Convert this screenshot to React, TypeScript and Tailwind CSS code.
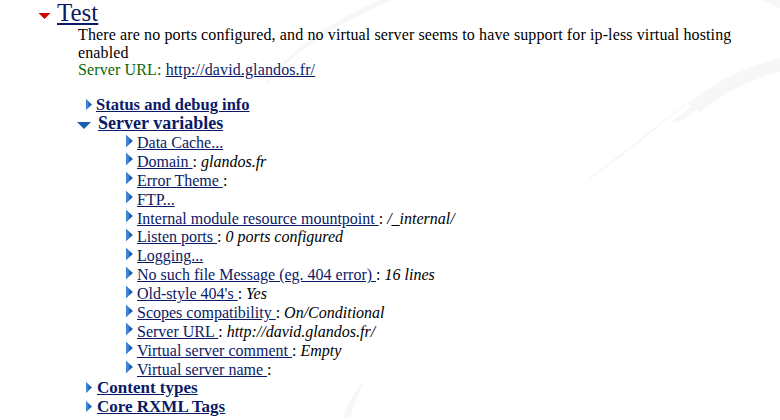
import React from "react";

type Row = { label: string; value?: string };

const rows: Row[] = [
  { label: "Data Cache..." },
  { label: "Domain", value: "glandos.fr" },
  { label: "Error Theme", value: "" },
  { label: "FTP..." },
  { label: "Internal module resource mountpoint", value: "/_internal/" },
  { label: "Listen ports", value: "0 ports configured" },
  { label: "Logging..." },
  { label: "No such file Message (eg. 404 error)", value: "16 lines" },
  { label: "Old-style 404's", value: "Yes" },
  { label: "Scopes compatibility", value: "On/Conditional" },
  { label: "Server URL", value: "http://david.glandos.fr/" },
  { label: "Virtual server comment", value: "Empty" },
  { label: "Virtual server name", value: "" },
];

function RightArrow({ className }: { className?: string }) {
  return (
    <svg width="7" height="12" viewBox="0 0 7 12" className={"shrink-0 " + (className || "")}>
      <polygon points="0,0 7,6 0,12" fill="#1d5fb2" />
      <polygon points="0,0 3,2.6 3,9.4 0,12" fill="#3f86d6" />
    </svg>
  );
}

function DownArrow({ color, className }: { color: string; className?: string }) {
  return (
    <svg width="14" height="7" viewBox="0 0 14 7" className={"shrink-0 " + (className || "")}>
      <polygon points="0,0 14,0 7,7" fill={color} />
    </svg>
  );
}

function Watermark() {
  return (
    <svg
      className="absolute inset-0 pointer-events-none"
      width="780"
      height="420"
      viewBox="0 0 780 420"
    >
      <g fill="#f7f7f7">
        <path d="M588,179 Q640,140 692,98 L697,94 Q650,136 592,178 Z" />
        <path d="M688,104 Q725,72 780,58 L780,72 Q738,82 700,112 Z" />
        <path d="M672,122 Q720,80 780,62 L780,66 Q728,86 680,122 Z" />
        <path d="M760,0 L780,0 L780,8 Q770,4 760,0 Z" />
        <path d="M265,86 Q300,40 392,0 L380,0 Q305,32 268,80 Z" />
        <path d="M343,418 Q350,395 365,380 Q356,398 350,418 Z" />
      </g>
    </svg>
  );
}

export default function App() {
  return (
    <div className="relative w-[780px] h-[420px] overflow-hidden bg-white font-['Liberation_Serif',serif] text-black">
      <Watermark />
      <div className="relative">
        <div className="flex items-start h-[25px] leading-[25px]">
          <DownArrow color="#d40000" className="ml-[38px] mt-[13px] w-[13px] h-[6px]" />
          <a href="#" className="ml-[6px] text-[25px] text-[#0b1a66] underline underline-offset-[2px]">
            Test
          </a>
        </div>
        <div className="ml-[78px] mt-[1px] text-[16px] tracking-[0.12px] leading-[17.5px] w-[680px]">
          <div>
            There are no ports configured, and no virtual server seems to have support for ip-less virtual hosting
            enabled
          </div>
          <div>
            <span className="text-[#0a660a]">Server URL: </span>
            <a href="#" className="text-[#0b1a66] underline">
              http://david.glandos.fr/
            </a>
          </div>
        </div>

        <div className="mt-[16px] flex items-start h-[19px] leading-[19px]">
          <RightArrow className="ml-[86px] mt-[4px] w-[6px] h-[11px]" />
          <a href="#" className="ml-[4px] text-[16.5px] font-bold text-[#0b1a66] underline">
            Status and debug info
          </a>
        </div>
        <div className="flex items-start h-[20.5px] leading-[19px]">
          <DownArrow color="#1d5fb2" className="ml-[77px] mt-[8.5px]" />
          <a href="#" className="ml-[7px] text-[18px] font-bold text-[#0b1a66] underline">
            Server variables
          </a>
        </div>

        <div className="flex flex-col">
          {rows.map((r) => (
            <div key={r.label} className="flex items-start h-[18.9px] leading-[18.9px] text-[16px]">
              <RightArrow className="ml-[126px] mt-[0.5px]" />
              <span className="ml-[4px] whitespace-pre">
                <a href="#" className="text-[#0b1a66] underline">
                  {r.value !== undefined ? r.label + " " : r.label}
                </a>
                {r.value !== undefined && (
                  <>
                    <span>: </span>
                    <i>{r.value}</i>
                  </>
                )}
              </span>
            </div>
          ))}
        </div>

        <div className="-mt-[2px] flex flex-col">
          {["Content types", "Core RXML Tags"].map((t) => (
            <div key={t} className="flex items-start h-[19px] leading-[19px]">
              <RightArrow className="ml-[86px] mt-[4px] w-[6px] h-[11px]" />
              <a href="#" className="ml-[5px] text-[17px] font-bold text-[#0b1a66] underline">
                {t}
              </a>
            </div>
          ))}
        </div>
      </div>
    </div>
  );
}
